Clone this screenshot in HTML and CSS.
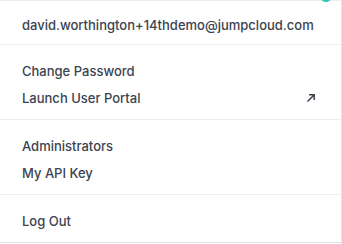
FILE: index.html
```html
<!DOCTYPE html>
<html lang="en">
<head>
<meta charset="UTF-8">
<title>Account Menu</title>
<meta name="viewport" content="width=device-width, initial-scale=1.0">
<link rel="stylesheet" href="styles.css">
</head>
<body>
<span class="avatar-edge"></span>
<div class="menu">
  <!-- Signed in user -->
  <div class="menu-section user">
    <span class="email">david.worthington+14thdemo@jumpcloud.com</span>
  </div>

  <div class="menu-section">
    <a class="menu-item">Change Password</a>
    <a class="menu-item">Launch User Portal
      <svg class="ext" width="10" height="10" viewBox="0 0 10 10">
        <path d="M1.5 8.5 L8 2 M3 1.8 H8.2 V7" fill="none" stroke="#3b4350" stroke-width="1.5"/>
      </svg>
    </a>
  </div>

  <div class="menu-section">
    <a class="menu-item">Administrators</a>
    <a class="menu-item">My API Key</a>
  </div>

  <div class="menu-section last">
    <a class="menu-item">Log Out</a>
  </div>
</div>
</body>
</html>
```

FILE: styles.css
```css
body {
  margin: 0;
  font-family: Inter, 'Noto Sans', Arial, sans-serif;
  background: #fff;
  color: #3b4350;
  overflow: hidden;
}
.avatar-edge {
  position: absolute;
  top: -6px;
  left: 321px;
  width: 10px;
  height: 8px;
  border-radius: 50%;
  background: #2ec4b6;
}
.menu {
  width: 342px;
  height: 243px;
  border-top: 1px solid #ececec;
  border-right: 1px solid #e4e4e4;
  border-bottom: 1px solid #e2e2e2;
  box-sizing: border-box;
  display: flex;
  flex-direction: column;
}
.menu-section {
  border-top: 1px solid #ededed;
  padding: 12px 0 8px;
}
.menu-section:first-child {
  border-top: none;
}
.menu-section.last {
  flex: 1;
}
.menu-section.user {
  padding: 4px 22px 0;
  height: 44px;
  box-sizing: border-box;
  display: flex;
  align-items: center;
}
.email {
  font-size: 13px;
  font-weight: 500;
}
.menu-item {
  display: flex;
  align-items: center;
  justify-content: space-between;
  height: 27px;
  padding: 0 25px 0 22px;
  font-size: 13px;
  font-weight: 500;
  cursor: pointer;
}
.menu-item:hover {
  background: #f6f6f6;
}
.ext {
  display: block;
}
```
